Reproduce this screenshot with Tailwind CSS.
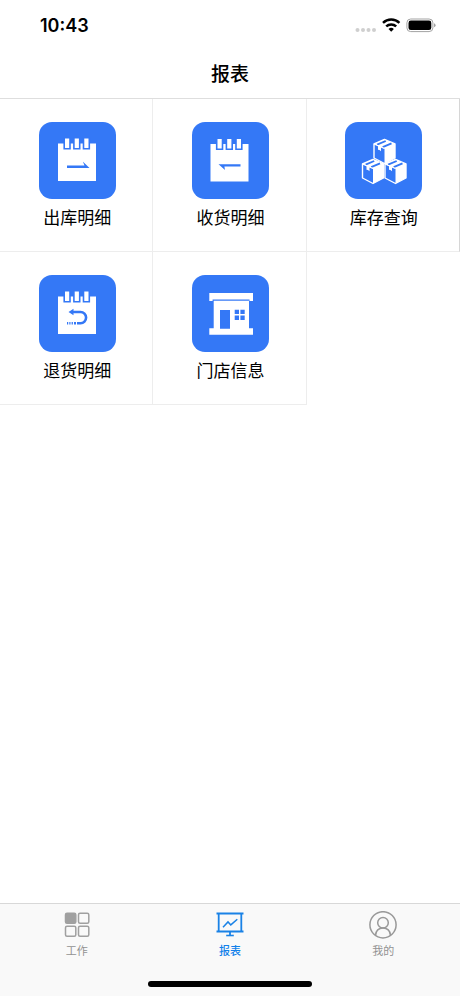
<!DOCTYPE html>
<html lang="zh-CN">
<head>
<meta charset="utf-8">
<meta name="viewport" content="width=device-width, initial-scale=1">
<title>报表</title>
<script src="https://cdn.jsdelivr.net/npm/@tailwindcss/browser@4"></script>
</head>
<body class="flex min-h-screen flex-col bg-white text-black font-['Liberation_Sans','Noto_Sans_CJK_SC',sans-serif]">
<svg class="hidden" aria-hidden="true">
  <symbol id="notepad" viewBox="0 0 77 77">
    <path fill="#fff" d="M19 21.5h38V59H19z"/>
    <path fill="#fff" stroke="#3478f6" stroke-width="1.6" d="M25.2 15.8h5.8v11h-5.8zM34.9 15.8h5.8v11h-5.8zM44.5 15.8h5.8v11h-5.8z"/>
  </symbol>
  <symbol id="box" viewBox="0 0 24 26" overflow="visible">
    <path fill="#fff" d="M12 .8l10.500 4.700L12 10.200 1.500 5.500zM12 10l10.500-4.500v14L12 25z"/>
    <path fill="none" stroke="#fff" stroke-width="1.400" stroke-linejoin="round" d="M12 1L1.500 5.500V19.500L12 25L22.500 19.500V5.500Z"/>
    <path fill="none" stroke="#3478f6" stroke-width="1.900" d="M4.600 6.200l8.600-3.700M10.200 8.600l8.800-3.800"/>
    <path fill="none" stroke="#fff" stroke-width="1.200" d="M1.500 5.500L12 10"/>
    <path fill="#fff" d="M5.500 6.800l3 1.300v4.600l-1.500-1.300-1.500-.2z"/>
  </symbol>
</svg>

<div class="flex h-[50px] items-center justify-between pl-10 pr-6 pt-0.5">
  <time class="text-lg font-semibold font-[Inter,sans-serif]">10:43</time>
  <svg class="h-4 w-[82px]" viewBox="0 0 82 16" aria-label="Wi-Fi，电量">
    <g fill="#cfcfcf"><circle cx="3.500" cy="12" r="2"/><circle cx="9" cy="12" r="2"/><circle cx="14.500" cy="12" r="2"/><circle cx="20" cy="12" r="2"/></g>
    <g fill="none" stroke="#000" stroke-width="2.500"><path d="M29 4.800a12 12 0 0 1 16.400 0"/><path d="M32.200 8.400a7.300 7.300 0 0 1 10 0"/></g>
    <path d="M34.500 11a4 4 0 0 1 5.400 0L37.200 13.800z"/>
    <rect x="52.900" y="1" width="26" height="12.600" rx="3.800" fill="none" stroke="#a3a3a3"/>
    <rect x="54.500" y="2.600" width="22.800" height="9.400" rx="2.300"/>
    <path fill="#a3a3a3" d="M80 5.300q1.600.5 1.600 2t-1.600 2z"/>
  </svg>
</div>

<header class="flex h-[49px] items-center justify-center border-b border-[#dedede] pt-0.5">
  <h1 class="text-[19px] leading-6 font-medium">报表</h1>
</header>

<main class="flex-1">
  <nav class="grid grid-cols-3 text-[17px] leading-6" aria-label="报表">
    <a href="#outbound" class="flex h-[153px] flex-col items-center gap-2 border-r border-b border-[#ededed] pt-[23px] pl-0.5">
      <svg class="size-[77px] rounded-[13px] bg-[#3478f6]" viewBox="0 0 77 77" aria-hidden="true">
        <use href="#notepad" width="77" height="77"/>
        <path fill="#3478f6" d="M28 43.400h17.500L43.800 39.500 50.500 46H28z"/>
      </svg>
      <span>出库明细</span>
    </a>
    <a href="#receipt" class="flex h-[153px] flex-col items-center gap-2 border-r border-b border-[#ededed] pt-[23px] pl-0.5">
      <svg class="size-[77px] rounded-[13px] bg-[#3478f6]" viewBox="0 0 77 77" aria-hidden="true">
        <use href="#notepad" y="0.500" x="-0.500" width="77" height="77"/>
        <path fill="#3478f6" d="M48.500 42.300H26.500L33 48l-.6-3.400h16.100z"/>
      </svg>
      <span>收货明细</span>
    </a>
    <a href="#stock" class="flex h-[153px] flex-col items-center gap-2 border-r border-b border-[#ededed] border-r-[#d6d6d6] pt-[23px] pl-0.5">
      <svg class="size-[77px] rounded-[13px] bg-[#3478f6]" viewBox="0 0 77 77" aria-hidden="true">
        <use href="#box" x="27.500" y="16.500" width="24" height="26"/>
        <use href="#box" x="16" y="36.500" width="24" height="26"/>
        <use href="#box" x="38.500" y="36.500" width="24" height="26"/>
      </svg>
      <span>库存查询</span>
    </a>
    <a href="#returns" class="flex h-[153px] flex-col items-center gap-2 border-r border-b border-[#ededed] pt-[23px] pl-0.5">
      <svg class="size-[77px] rounded-[13px] bg-[#3478f6]" viewBox="0 0 77 77" aria-hidden="true">
        <use href="#notepad" width="77" height="77"/>
        <path fill="none" stroke="#3478f6" stroke-width="2.600" d="M33 37h8.500a5.600 5.600 0 0 1 0 11.200H38"/>
        <path fill="#3478f6" d="M29.500 37l5-3.300v6.600zM28 47h1.200v2.500H28zM30.300 47h1.200v2.500h-1.200zM32.600 47h1.300v2.500h-1.300zM35 46.900h2v2.600h-2z"/>
      </svg>
      <span>退货明细</span>
    </a>
    <a href="#store" class="flex h-[153px] flex-col items-center gap-2 border-r border-b border-[#ededed] pt-[23px] pl-0.5">
      <svg class="size-[77px] rounded-[13px] bg-[#3478f6]" viewBox="0 0 77 77" aria-hidden="true">
        <path fill="#fff" d="M17.300 18H61v8h-3.500v-1.500H20.600V26h-3.300zM21.700 25.700H57v27.600h4v6.400H17.300v-6.400h4.400z"/>
        <path fill="#3478f6" d="M28 35h10v18.700H28zM42.700 34.700H47V39h-4.300zM48.400 34.700h4.300V39h-4.300zM42.700 40.600H47v4.300h-4.300zM48.400 40.600h4.300v4.300h-4.300z"/>
      </svg>
      <span>门店信息</span>
    </a>
  </nav>
</main>

<footer class="border-t border-[#d8d8d8] bg-[#f9f9f9]">
  <nav class="grid grid-cols-3 pt-[7px] text-[11px] leading-4 text-[#929292]" aria-label="主导航">
    <a href="#work" class="flex flex-col items-center gap-1">
      <svg class="size-7" viewBox="0 0 28 28" fill="none" stroke="#a0a0a0" stroke-width="1.500" aria-hidden="true">
        <rect x="2.500" y="2.200" width="10.300" height="10" rx="1.500" fill="#a0a0a0"/><rect x="15.500" y="2.200" width="10.300" height="10" rx="1.500"/>
        <rect x="2.500" y="15.200" width="10.300" height="10" rx="1.500"/><rect x="15.500" y="15.200" width="10.300" height="10" rx="1.500"/>
      </svg>
      <span>工作</span>
    </a>
    <a href="#reports" aria-current="page" class="flex flex-col items-center gap-1 font-medium text-[#1180ea]">
      <svg class="size-7" viewBox="0 0 28 28" fill="none" stroke="#1a82e6" aria-hidden="true">
        <path stroke-width="2" d="M.5 2.500h27M.5 20.500h27"/>
        <path stroke-width="1.800" d="M2.700 2.500v18M25.300 2.500v18M14 20.500v4"/>
        <path stroke-width="1.600" d="M10.200 24.500h7.600"/>
        <path stroke-width="1.500" d="M7 16.200l5-5.300 2.800 3L21.300 8.200"/>
      </svg>
      <span>报表</span>
    </a>
    <a href="#mine" class="flex flex-col items-center gap-1">
      <svg class="size-7" viewBox="0 0 28 28" fill="none" stroke="#999" stroke-width="1.500" aria-hidden="true">
        <circle cx="14" cy="13.800" r="13.100"/><circle cx="14" cy="11.800" r="5.300"/><path d="M6.500 24.300c.5-4.700 3.500-7.200 7.500-7.200s7 2.500 7.500 7.200"/>
      </svg>
      <span>我的</span>
    </a>
  </nav>
  <div class="flex justify-center pt-[22px] pb-[9px]"><div class="h-1.5 w-[164px] rounded-full bg-black"></div></div>
</footer>
</body>
</html>
